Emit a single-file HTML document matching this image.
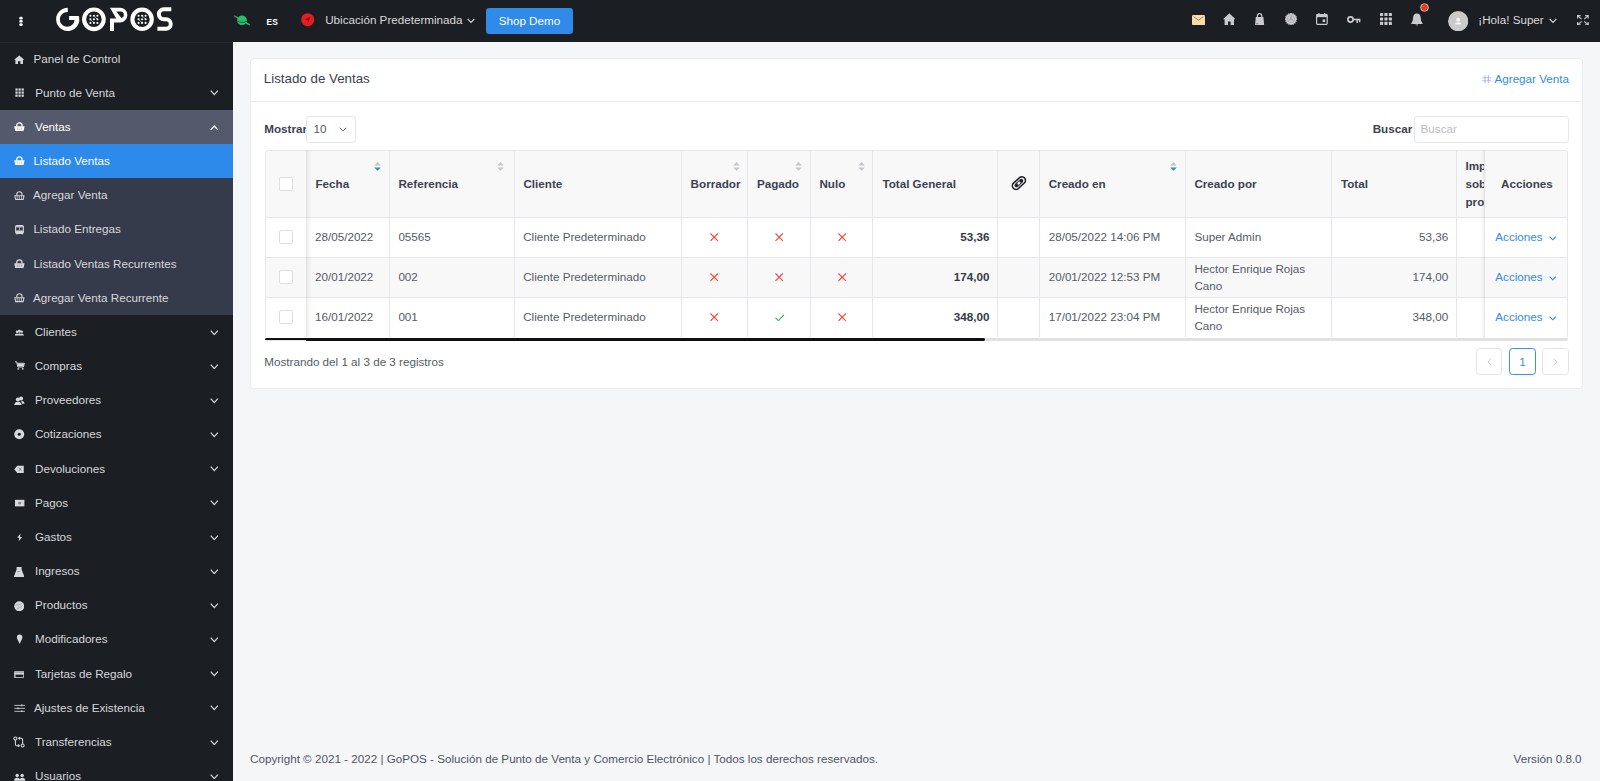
<!DOCTYPE html><html><head><meta charset="utf-8"><style>
*{box-sizing:border-box;margin:0;padding:0}
html,body{width:1600px;height:781px;overflow:hidden;background:#f5f6f8;font-family:"Liberation Sans",sans-serif;font-size:11.667px;color:#505661}
.a{position:absolute;white-space:nowrap}
#nav{position:absolute;left:0;top:0;width:1600px;height:41.667px;background:#1b1e23}
#side{position:absolute;left:0;top:41.667px;width:233.333px;height:740px;background:#1b1e23;overflow:hidden}
.mi{position:absolute;left:0;width:233.333px;height:34.1667px;color:#d4d6da;font-size:11.667px;white-space:nowrap}
.mi .t{position:absolute;top:0;line-height:34.1667px}
.mi svg{position:absolute}
#card{position:absolute;left:250px;top:58.333px;width:1333.333px;height:330.9px;background:#fff;border:1px solid #e9ebee;border-radius:4px}
</style></head><body>
<div id="nav">
<svg class="a" style="left:19px;top:15.5px" width="4" height="11" viewBox="0 0 4 11"><rect x="0.3" y="0.8" width="3.4" height="2.6" rx="1.2" fill="#fff"/><rect x="0.3" y="4" width="3.4" height="2.6" rx="1.2" fill="#fff"/><rect x="0.3" y="7.3" width="3.4" height="2.6" rx="1.2" fill="#fff"/></svg>
<svg class="a" style="left:0;top:0" width="200" height="41" viewBox="0 0 200 41"><path fill="#fff" d="M67.8,7.8 A11.6,11.6 0 1 0 78.8,15.9 L69.1,15.9 L69.1,20 L74.6,20 A7.4,7.4 0 1 1 67.8,12 Z"/><circle cx="93.9" cy="19.3" r="9.8" stroke="#fff" stroke-width="4.1" fill="none"/><path fill="#fff" fill-rule="evenodd" d="M110,7.7 H120 A7.4,7.4 0 0 1 120,22.5 H114 V30.9 H110 V18.6 H116.2 Z M116.4,11.4 H120.3 A3.3,3.3 0 0 1 121.3,17.9 Z"/><circle cx="142.1" cy="19.3" r="9.7" stroke="#fff" stroke-width="4.1" fill="none"/><path stroke="#fff" stroke-width="4" fill="none" d="M171.3,9.3 H163.9 A5,5 0 0 0 163.9,19.3 H166 A4.75,4.75 0 0 1 166,28.8 H157.4"/><circle cx="90.40" cy="15.70" r="1.05" fill="#fff"/><circle cx="90.40" cy="19.30" r="1.05" fill="#fff"/><circle cx="90.40" cy="22.90" r="1.05" fill="#fff"/><circle cx="93.90" cy="15.70" r="1.05" fill="#fff"/><circle cx="93.90" cy="19.30" r="1.05" fill="#fff"/><circle cx="93.90" cy="22.90" r="1.05" fill="#fff"/><circle cx="97.40" cy="15.70" r="1.05" fill="#fff"/><circle cx="97.40" cy="19.30" r="1.05" fill="#fff"/><circle cx="97.40" cy="22.90" r="1.05" fill="#fff"/><path d="M93.90,15.70 L97.40,19.30 M90.40,19.30 L93.90,22.90" stroke="#fff" stroke-width="0.7" opacity="0.8"/><circle cx="138.60" cy="15.70" r="1.05" fill="#fff"/><circle cx="138.60" cy="19.30" r="1.05" fill="#fff"/><circle cx="138.60" cy="22.90" r="1.05" fill="#fff"/><circle cx="142.10" cy="15.70" r="1.05" fill="#fff"/><circle cx="142.10" cy="19.30" r="1.05" fill="#fff"/><circle cx="142.10" cy="22.90" r="1.05" fill="#fff"/><circle cx="145.60" cy="15.70" r="1.05" fill="#fff"/><circle cx="145.60" cy="19.30" r="1.05" fill="#fff"/><circle cx="145.60" cy="22.90" r="1.05" fill="#fff"/><path d="M142.10,15.70 L145.60,19.30 M138.60,19.30 L142.10,22.90" stroke="#fff" stroke-width="0.7" opacity="0.8"/></svg>
<svg class="a" style="left:233px;top:14px" width="18" height="12" viewBox="0 0 18 12"><circle cx="9" cy="6.4" r="4.9" fill="#27bf6c"/><path d="M1.2,1.8 Q4,3.5 9,6.6 Q14,9.5 16.8,10.8" stroke="#27bf6c" stroke-width="1.3" fill="none"/><path d="M3.4,6.6 Q9,10 14.6,7" stroke="#1b1e23" stroke-width="0.6" fill="none"/></svg>
<div class="a" style="left:266.6px;top:17px;font-size:8.4px;font-weight:bold;color:#fff;line-height:10px">ES</div>
<svg class="a" style="left:301px;top:12.5px" width="13.4" height="13.4" viewBox="0 0 13.4 13.4"><circle cx="6.7" cy="6.7" r="6.5" fill="#e91c21"/><path d="M9.6,3.6 L3.8,6.4 L6.6,6.9 L7.0,9.6 Z" fill="#7a0b0e"/></svg>
<div class="a" style="left:325.2px;top:13px;font-size:11.667px;color:#d9dadd;line-height:13.417px">Ubicación Predeterminada</div>
<svg class="a" style="left:467.2px;top:17.6px" width="8" height="5.5" viewBox="0 0 8 5.5"><path d="M0.6,0.8 L4,4.4 L7.4,0.8" stroke="#d6d7da" stroke-width="1.2" fill="none"/></svg>
<div class="a" style="left:485.9px;top:7.6px;width:87.1px;height:26.6px;background:#2f8aea;border-radius:3.3px;color:#fff;font-size:11.667px;line-height:26.6px;text-align:center">Shop Demo</div>
<svg class="a" style="left:1192.00px;top:15.00px" width="13.00" height="10.20" viewBox="0 0 13 10.2"><rect x="0" y="0" width="13" height="10.2" rx="1.3" fill="#fbd9a9"/><path d="M1.5,1.6 L6.5,5.2 L11.5,1.6" stroke="#5a4a3a" stroke-width="0.8" fill="none" opacity="0.7"/></svg>
<svg class="a" style="left:1222.80px;top:13.00px" width="12.60" height="12.20" viewBox="0 0 12.6 12.2"><path d="M6.3,0.3 L0,6.3 L1.6,6.3 L1.6,12.2 L5,12.2 L5,8.6 L7.6,8.6 L7.6,12.2 L11,12.2 L11,6.3 L12.6,6.3 Z" fill="#c9cacd"/></svg>
<svg class="a" style="left:1255.40px;top:12.60px" width="9.20" height="12.60" viewBox="0 0 9.2 12.6"><path d="M2.4,4.5 V3 A2.2,2.3 0 0 1 6.8,3 V4.5" stroke="#c9cacd" stroke-width="1.2" fill="none"/><path d="M0.8,4 H8.4 L9.2,12.6 H0 Z" fill="#c9cacd"/><rect x="1.5" y="10" width="1.5" height="1.2" fill="#777"/></svg>
<svg class="a" style="left:1284.80px;top:13.10px" width="12.00" height="12.00" viewBox="0 0 12 12"><circle cx="6" cy="6" r="5.3" fill="#c9cacd"/><circle cx="11.30" cy="6.00" r="0.85" fill="#c9cacd"/><circle cx="10.90" cy="8.03" r="0.85" fill="#c9cacd"/><circle cx="9.75" cy="9.75" r="0.85" fill="#c9cacd"/><circle cx="8.03" cy="10.90" r="0.85" fill="#c9cacd"/><circle cx="6.00" cy="11.30" r="0.85" fill="#c9cacd"/><circle cx="3.97" cy="10.90" r="0.85" fill="#c9cacd"/><circle cx="2.25" cy="9.75" r="0.85" fill="#c9cacd"/><circle cx="1.10" cy="8.03" r="0.85" fill="#c9cacd"/><circle cx="0.70" cy="6.00" r="0.85" fill="#c9cacd"/><circle cx="1.10" cy="3.97" r="0.85" fill="#c9cacd"/><circle cx="2.25" cy="2.25" r="0.85" fill="#c9cacd"/><circle cx="3.97" cy="1.10" r="0.85" fill="#c9cacd"/><circle cx="6.00" cy="0.70" r="0.85" fill="#c9cacd"/><circle cx="8.03" cy="1.10" r="0.85" fill="#c9cacd"/><circle cx="9.75" cy="2.25" r="0.85" fill="#c9cacd"/><circle cx="10.90" cy="3.97" r="0.85" fill="#c9cacd"/><circle cx="6" cy="6" r="3.6" stroke="#9a9ca0" stroke-width="0.5" fill="none"/><path d="M6,3.3 V6 L8.2,7.4 M6,6 L3.8,7.4" stroke="#8a8c90" stroke-width="0.8" fill="none"/></svg>
<svg class="a" style="left:1316.30px;top:13.10px" width="11.80" height="12.00" viewBox="0 0 11.8 12"><rect x="0.6" y="1.6" width="10.6" height="9.8" rx="0.8" stroke="#c9cacd" stroke-width="1.2" fill="none"/><rect x="0.6" y="1.6" width="10.6" height="2.6" fill="#c9cacd"/><path d="M3,0 V2.5 M8.8,0 V2.5" stroke="#c9cacd" stroke-width="1.2"/><rect x="6.6" y="6.4" width="2.6" height="2.6" fill="#c9cacd"/></svg>
<svg class="a" style="left:1347.20px;top:15.80px" width="13.40" height="7.40" viewBox="0 0 13.4 7.4"><circle cx="3.5" cy="3.5" r="2.6" stroke="#c9cacd" stroke-width="1.7" fill="none"/><path d="M6,2.7 H13.4 V4.3 H6 Z" fill="#c9cacd"/><rect x="9.4" y="4" width="1.5" height="3" fill="#c9cacd"/><rect x="11.9" y="4" width="1.5" height="2.3" fill="#c9cacd"/></svg>
<svg class="a" style="left:1379.90px;top:12.80px" width="12.00" height="12.00" viewBox="0 0 12 12"><rect x="0.00" y="0.00" width="3.1" height="3.1" rx="0.4" fill="#c9cacd"/><rect x="0.00" y="4.40" width="3.1" height="3.1" rx="0.4" fill="#c9cacd"/><rect x="0.00" y="8.80" width="3.1" height="3.1" rx="0.4" fill="#c9cacd"/><rect x="4.40" y="0.00" width="3.1" height="3.1" rx="0.4" fill="#c9cacd"/><rect x="4.40" y="4.40" width="3.1" height="3.1" rx="0.4" fill="#c9cacd"/><rect x="4.40" y="8.80" width="3.1" height="3.1" rx="0.4" fill="#c9cacd"/><rect x="8.80" y="0.00" width="3.1" height="3.1" rx="0.4" fill="#c9cacd"/><rect x="8.80" y="4.40" width="3.1" height="3.1" rx="0.4" fill="#c9cacd"/><rect x="8.80" y="8.80" width="3.1" height="3.1" rx="0.4" fill="#c9cacd"/></svg>
<svg class="a" style="left:1411.40px;top:12.60px" width="11.80" height="13.40" viewBox="0 0 11.8 13.4"><path d="M5.9,0.4 Q2.2,0.6 2.1,4.8 Q2,8.6 0.3,10.2 V11.1 H11.5 V10.2 Q9.8,8.6 9.7,4.8 Q9.6,0.6 5.9,0.4 Z" fill="#c9cacd"/><path d="M4.5,11.6 Q5.9,13.6 7.3,11.6 Z" fill="#c9cacd"/></svg>
<svg class="a" style="left:1420.40px;top:2.80px" width="9.00" height="9.00" viewBox="0 0 9 9"><circle cx="4.5" cy="4.5" r="4.1" fill="#f0f0f0"/><circle cx="4.5" cy="4.5" r="3.4" fill="#ea3c17"/></svg>
<svg class="a" style="left:1448.00px;top:11.00px" width="20.40" height="20.40" viewBox="0 0 20.4 20.4"><circle cx="10.2" cy="10.2" r="10.1" fill="#cacaca"/><circle cx="10.2" cy="8.7" r="2.0" fill="#f4f4f4"/><path d="M6.9,13.6 Q7.2,11.3 10.2,11.3 Q13.2,11.3 13.5,13.6 Z" fill="#f4f4f4"/></svg>
<div class="a" style="left:1478.3px;top:13px;font-size:11.667px;color:#d9dadd;line-height:13.417px">&#161;Hola! Super</div>
<svg class="a" style="left:1548.80px;top:17.80px" width="8.00" height="5.50" viewBox="0 0 8 5.5"><path d="M0.6,0.8 L4,4.4 L7.4,0.8" stroke="#d6d7da" stroke-width="1.2" fill="none"/></svg>
<svg class="a" style="left:1577.30px;top:14.60px" width="11.80" height="10.50" viewBox="0 0 11.8 10.5"><path d="M0.6,3.4 V0.6 H3.6 M0.8,0.8 L4.6,4.2 M11.2,3.4 V0.6 H8.2 M11,0.8 L7.2,4.2 M0.6,7.1 V9.9 H3.6 M0.8,9.7 L4.6,6.3 M11.2,7.1 V9.9 H8.2 M11,9.7 L7.2,6.3" stroke="#c9cacd" stroke-width="1.1" fill="none"/></svg>
</div>
<div id="side">
<div class="a" style="left:0;top:0;width:233.333px;height:1px;background:#24272c"></div>
<div class="mi" style="top:0.000px; color:#d6d8dc">
<svg style="left:14.30px;top:13.00px" width="10.40" height="9.50" viewBox="0 0 12 11"><path d="M6 0.5L0 5.6H1.6V10.5H4.6V7.2H7.4V10.5H10.4V5.6H12Z" fill="#d6d8dc"/></svg>
<span class="t" style="left:33.50px">Panel de Control</span>
</div>
<div class="mi" style="top:34.167px; color:#d6d8dc">
<svg style="left:14.80px;top:12.50px" width="9.40" height="9.40" viewBox="0 0 11 11"><rect x="0.5" y="0.5" width="2.6" height="2.6" fill="#d6d8dc"/><rect x="0.5" y="4.1" width="2.6" height="2.6" fill="#d6d8dc"/><rect x="0.5" y="7.7" width="2.6" height="2.6" fill="#d6d8dc"/><rect x="4.1" y="0.5" width="2.6" height="2.6" fill="#d6d8dc"/><rect x="4.1" y="4.1" width="2.6" height="2.6" fill="#d6d8dc"/><rect x="4.1" y="7.7" width="2.6" height="2.6" fill="#d6d8dc"/><rect x="7.7" y="0.5" width="2.6" height="2.6" fill="#d6d8dc"/><rect x="7.7" y="4.1" width="2.6" height="2.6" fill="#d6d8dc"/><rect x="7.7" y="7.7" width="2.6" height="2.6" fill="#d6d8dc"/></svg>
<span class="t" style="left:35.30px">Punto de Venta</span>
<svg style="left:210.00px;top:14.60px" width="8.60" height="5.60" viewBox="0 0 8.6 5.6"><path d="M0.7 0.7L4.3 4.6L7.9 0.7" stroke="#d6d8dc" stroke-width="1.25" fill="none"/></svg>
</div>
<div class="mi" style="top:68.333px;background:#545a6c; color:#ffffff">
<svg style="left:13.90px;top:12.30px" width="10.80" height="9.50" viewBox="0 0 12 11"><path d="M3 5.2V3.6A3 2.7 0 0 1 9 3.6V5.2" stroke="#ffffff" stroke-width="1.5" fill="none"/><path d="M0 4.8H12L10.8 10.5H1.2Z" fill="#ffffff"/><path d="M3.6 6.3V9.3M6 6.3V9.3M8.4 6.3V9.3" stroke="#545a6c" stroke-width="0.7" opacity="0.55"/></svg>
<span class="t" style="left:35.00px">Ventas</span>
<svg style="left:210.00px;top:14.60px" width="8.60" height="5.60" viewBox="0 0 8.6 5.6"><path d="M0.7 4.9L4.3 1.0L7.9 4.9" stroke="#ffffff" stroke-width="1.25" fill="none"/></svg>
</div>
<div class="mi" style="top:102.500px;background:#2d89ea; color:#ffffff">
<svg style="left:13.90px;top:12.30px" width="10.80" height="9.50" viewBox="0 0 12 11"><path d="M3 5.2V3.6A3 2.7 0 0 1 9 3.6V5.2" stroke="#ffffff" stroke-width="1.5" fill="none"/><path d="M0 4.8H12L10.8 10.5H1.2Z" fill="#ffffff"/><path d="M3.6 6.3V9.3M6 6.3V9.3M8.4 6.3V9.3" stroke="#2d89ea" stroke-width="0.7" opacity="0.55"/></svg>
<span class="t" style="left:33.40px">Listado Ventas</span>
</div>
<div class="mi" style="top:136.667px;background:#363b4b; color:#d6d8dc">
<svg style="left:13.90px;top:12.30px" width="10.80" height="9.50" viewBox="0 0 12 11"><path d="M3 5.2V3.5A3 2.6 0 0 1 9 3.5V5.2" stroke="#d6d8dc" stroke-width="1.3" fill="none"/><path d="M0.7 5.5H11.3L10.3 10H1.7Z" stroke="#d6d8dc" stroke-width="1.2" fill="none"/><path d="M3.5 6V9.5M6 6V9.5M8.5 6V9.5" stroke="#d6d8dc" stroke-width="0.9"/></svg>
<span class="t" style="left:33.00px">Agregar Venta</span>
</div>
<div class="mi" style="top:170.833px;background:#363b4b; color:#d6d8dc">
<svg style="left:15.00px;top:12.60px" width="9.00" height="9.60" viewBox="0 0 10 10.5"><rect x="0.7" y="0.6" width="8.6" height="8.8" rx="1.3" stroke="#d6d8dc" stroke-width="1.2" fill="none"/><rect x="1.2" y="1.2" width="7.6" height="1.3" fill="#d6d8dc"/><rect x="1.2" y="6" width="7.6" height="3" fill="#d6d8dc"/><path d="M5 2.5V5.8" stroke="#d6d8dc" stroke-width="0.8"/><rect x="1.2" y="9" width="1.8" height="1.3" fill="#d6d8dc"/><rect x="7" y="9" width="1.8" height="1.3" fill="#d6d8dc"/></svg>
<span class="t" style="left:33.40px">Listado Entregas</span>
</div>
<div class="mi" style="top:205.000px;background:#363b4b; color:#d6d8dc">
<svg style="left:13.90px;top:12.30px" width="10.80" height="9.50" viewBox="0 0 12 11"><path d="M3 5.2V3.6A3 2.7 0 0 1 9 3.6V5.2" stroke="#d6d8dc" stroke-width="1.5" fill="none"/><path d="M0 4.8H12L10.8 10.5H1.2Z" fill="#d6d8dc"/><path d="M3.6 6.3V9.3M6 6.3V9.3M8.4 6.3V9.3" stroke="#363b4b" stroke-width="0.7" opacity="0.55"/></svg>
<span class="t" style="left:33.40px">Listado Ventas Recurrentes</span>
</div>
<div class="mi" style="top:239.167px;background:#363b4b; color:#d6d8dc">
<svg style="left:13.90px;top:12.30px" width="10.80" height="9.50" viewBox="0 0 12 11"><path d="M3 5.2V3.5A3 2.6 0 0 1 9 3.5V5.2" stroke="#d6d8dc" stroke-width="1.3" fill="none"/><path d="M0.7 5.5H11.3L10.3 10H1.7Z" stroke="#d6d8dc" stroke-width="1.2" fill="none"/><path d="M3.5 6V9.5M6 6V9.5M8.5 6V9.5" stroke="#d6d8dc" stroke-width="0.9"/></svg>
<span class="t" style="left:33.00px">Agregar Venta Recurrente</span>
</div>
<div class="mi" style="top:273.334px; color:#d6d8dc">
<svg style="left:14.00px;top:14.40px" width="10.70" height="6.60" viewBox="0 0 12 8.5"><circle cx="3" cy="3.5" r="1.6" fill="#d6d8dc"/><circle cx="6" cy="3" r="1.9" fill="#d6d8dc"/><circle cx="9" cy="3.5" r="1.6" fill="#d6d8dc"/><path d="M0 8.5Q0.5 5.7 3 5.7Q4.2 5.7 4.6 6.3Q5.2 5.6 6 5.6Q6.8 5.6 7.4 6.3Q7.8 5.7 9 5.7Q11.5 5.7 12 8.5Z" fill="#d6d8dc"/></svg>
<span class="t" style="left:34.70px">Clientes</span>
<svg style="left:210.00px;top:14.60px" width="8.60" height="5.60" viewBox="0 0 8.6 5.6"><path d="M0.7 0.7L4.3 4.6L7.9 0.7" stroke="#d6d8dc" stroke-width="1.25" fill="none"/></svg>
</div>
<div class="mi" style="top:307.500px; color:#d6d8dc">
<svg style="left:15.00px;top:12.00px" width="10.00" height="9.50" viewBox="0 0 12 11"><path d="M0 0.8H2L3.4 7H10L11.3 2.5H2.6" stroke="#d6d8dc" stroke-width="1.2" fill="none"/><path d="M3 3H11L10 6.5H3.8Z" fill="#d6d8dc"/><circle cx="4" cy="9.2" r="1.1" fill="#d6d8dc"/><circle cx="9.3" cy="9.2" r="1.1" fill="#d6d8dc"/></svg>
<span class="t" style="left:34.70px">Compras</span>
<svg style="left:210.00px;top:14.60px" width="8.60" height="5.60" viewBox="0 0 8.6 5.6"><path d="M0.7 0.7L4.3 4.6L7.9 0.7" stroke="#d6d8dc" stroke-width="1.25" fill="none"/></svg>
</div>
<div class="mi" style="top:341.667px; color:#d6d8dc">
<svg style="left:14.00px;top:12.80px" width="10.80" height="9.50" viewBox="0 0 12 11"><circle cx="4.3" cy="4" r="2.4" fill="#d6d8dc"/><circle cx="8" cy="2.8" r="2.3" fill="#d6d8dc"/><path d="M0 10.5Q0.5 6.8 4.3 6.8Q8 6.8 8.6 10.5Z" fill="#d6d8dc"/><path d="M8 5.5Q11.5 5.5 12 9H9" fill="#d6d8dc"/></svg>
<span class="t" style="left:35.00px">Proveedores</span>
<svg style="left:210.00px;top:14.60px" width="8.60" height="5.60" viewBox="0 0 8.6 5.6"><path d="M0.7 0.7L4.3 4.6L7.9 0.7" stroke="#d6d8dc" stroke-width="1.25" fill="none"/></svg>
</div>
<div class="mi" style="top:375.834px; color:#d6d8dc">
<svg style="left:14.20px;top:12.00px" width="10.50" height="10.50" viewBox="0 0 11 11"><circle cx="5.5" cy="5.5" r="5.2" fill="#d6d8dc"/><circle cx="5.5" cy="5.5" r="1.6" fill="#1b1e23"/></svg>
<span class="t" style="left:34.90px">Cotizaciones</span>
<svg style="left:210.00px;top:14.60px" width="8.60" height="5.60" viewBox="0 0 8.6 5.6"><path d="M0.7 0.7L4.3 4.6L7.9 0.7" stroke="#d6d8dc" stroke-width="1.25" fill="none"/></svg>
</div>
<div class="mi" style="top:410.000px; color:#d6d8dc">
<svg style="left:14.00px;top:13.00px" width="10.50" height="8.60" viewBox="0 0 12 10.5"><path d="M3.5 0.8H11.5V9.8H3.5L0 5.3Z" fill="#d6d8dc"/><path d="M5.6 3.2L8.6 7.2M8.6 3.2L5.6 7.2" stroke="#1b1e23" stroke-width="0.8" opacity="0.6"/></svg>
<span class="t" style="left:35.00px">Devoluciones</span>
<svg style="left:210.00px;top:14.60px" width="8.60" height="5.60" viewBox="0 0 8.6 5.6"><path d="M0.7 0.7L4.3 4.6L7.9 0.7" stroke="#d6d8dc" stroke-width="1.25" fill="none"/></svg>
</div>
<div class="mi" style="top:444.167px; color:#d6d8dc">
<svg style="left:13.50px;top:13.20px" width="11.40" height="8.20" viewBox="0 0 11.5 10"><rect x="0" y="1" width="11.5" height="8" fill="#d6d8dc"/><ellipse cx="5.75" cy="5" rx="2" ry="1.6" fill="#888"/></svg>
<span class="t" style="left:35.00px">Pagos</span>
<svg style="left:210.00px;top:14.60px" width="8.60" height="5.60" viewBox="0 0 8.6 5.6"><path d="M0.7 0.7L4.3 4.6L7.9 0.7" stroke="#d6d8dc" stroke-width="1.25" fill="none"/></svg>
</div>
<div class="mi" style="top:478.334px; color:#d6d8dc">
<svg style="left:15.90px;top:12.90px" width="6.60" height="9.00" viewBox="0 0 9 11"><path d="M6.2 0L1.5 6H4.5L3.5 11L8.5 4.8H5.5Z" fill="#d6d8dc"/></svg>
<span class="t" style="left:35.00px">Gastos</span>
<svg style="left:210.00px;top:14.60px" width="8.60" height="5.60" viewBox="0 0 8.6 5.6"><path d="M0.7 0.7L4.3 4.6L7.9 0.7" stroke="#d6d8dc" stroke-width="1.25" fill="none"/></svg>
</div>
<div class="mi" style="top:512.500px; color:#d6d8dc">
<svg style="left:14.20px;top:12.50px" width="10.20" height="10.40" viewBox="0 0 10.2 10.4"><path d="M2.6,0 H7.6 V2.4 L10.2,9.3 Q10.4,10.4 9.2,10.4 H1 Q-0.2,10.4 0,9.3 L2.6,2.4 Z" fill="#d6d8dc"/><path d="M3.2,4.6 H6" stroke="#777" stroke-width="0.6"/></svg>
<span class="t" style="left:34.90px">Ingresos</span>
<svg style="left:210.00px;top:14.60px" width="8.60" height="5.60" viewBox="0 0 8.6 5.6"><path d="M0.7 0.7L4.3 4.6L7.9 0.7" stroke="#d6d8dc" stroke-width="1.25" fill="none"/></svg>
</div>
<div class="mi" style="top:546.667px; color:#d6d8dc">
<svg style="left:13.90px;top:12.40px" width="10.60" height="10.40" viewBox="0 0 11 11"><circle cx="5.5" cy="5.5" r="5.3" fill="#d6d8dc"/><path d="M2 4Q5 5 8 2.5M3 8Q6.5 7.3 9 4.8" stroke="#888" stroke-width="0.6" fill="none"/></svg>
<span class="t" style="left:35.00px">Productos</span>
<svg style="left:210.00px;top:14.60px" width="8.60" height="5.60" viewBox="0 0 8.6 5.6"><path d="M0.7 0.7L4.3 4.6L7.9 0.7" stroke="#d6d8dc" stroke-width="1.25" fill="none"/></svg>
</div>
<div class="mi" style="top:580.834px; color:#d6d8dc">
<svg style="left:15.60px;top:12.00px" width="7.30" height="10.20" viewBox="0 0 8 11"><circle cx="4" cy="3.4" r="3" fill="#d6d8dc"/><path d="M1.5 5.3H6.5L4 11Z" fill="#d6d8dc"/></svg>
<span class="t" style="left:35.00px">Modificadores</span>
<svg style="left:210.00px;top:14.60px" width="8.60" height="5.60" viewBox="0 0 8.6 5.6"><path d="M0.7 0.7L4.3 4.6L7.9 0.7" stroke="#d6d8dc" stroke-width="1.25" fill="none"/></svg>
</div>
<div class="mi" style="top:615.001px; color:#d6d8dc">
<svg style="left:13.80px;top:14.00px" width="10.60" height="7.40" viewBox="0 0 10.6 7.4"><rect x="0" y="0" width="10.6" height="7.4" rx="0.5" fill="#a9abae"/><rect x="0" y="2.1" width="10.6" height="1.1" fill="#d6d8dc"/><rect x="1.4" y="3.7" width="7.9" height="2.2" rx="1.1" fill="#1b1e23"/></svg>
<span class="t" style="left:34.90px">Tarjetas de Regalo</span>
<svg style="left:210.00px;top:14.60px" width="8.60" height="5.60" viewBox="0 0 8.6 5.6"><path d="M0.7 0.7L4.3 4.6L7.9 0.7" stroke="#d6d8dc" stroke-width="1.25" fill="none"/></svg>
</div>
<div class="mi" style="top:649.167px; color:#d6d8dc">
<svg style="left:13.50px;top:12.80px" width="11.40" height="8.80" viewBox="0 0 11.5 9.5"><path d="M0 1.5H11.5M0 4.7H11.5M0 7.9H11.5" stroke="#d6d8dc" stroke-width="0.9"/><path d="M8 0.5V2.5M4 3.7V5.7M8 6.9V8.9" stroke="#d6d8dc" stroke-width="1.3"/></svg>
<span class="t" style="left:34.00px">Ajustes de Existencia</span>
<svg style="left:210.00px;top:14.60px" width="8.60" height="5.60" viewBox="0 0 8.6 5.6"><path d="M0.7 0.7L4.3 4.6L7.9 0.7" stroke="#d6d8dc" stroke-width="1.25" fill="none"/></svg>
</div>
<div class="mi" style="top:683.334px; color:#d6d8dc">
<svg style="left:13.00px;top:11.30px" width="12.00" height="12.00" viewBox="0 0 12.5 12"><circle cx="2.5" cy="2.3" r="1.6" stroke="#d6d8dc" stroke-width="1.1" fill="none"/><path d="M2.5,3.9 V8.3 Q2.5,9.9 4.1,9.9 H6.6 M5.3,8.6 L6.6,9.9 L5.3,11.2" stroke="#d6d8dc" stroke-width="1.1" fill="none"/><circle cx="10" cy="9.7" r="1.6" stroke="#d6d8dc" stroke-width="1.1" fill="none"/><path d="M10,8.1 V3.7 Q10,2.1 8.4,2.1 H5.9 M7.2,0.8 L5.9,2.1 L7.2,3.4" stroke="#d6d8dc" stroke-width="1.1" fill="none"/></svg>
<span class="t" style="left:35.00px">Transferencias</span>
<svg style="left:210.00px;top:14.60px" width="8.60" height="5.60" viewBox="0 0 8.6 5.6"><path d="M0.7 0.7L4.3 4.6L7.9 0.7" stroke="#d6d8dc" stroke-width="1.25" fill="none"/></svg>
</div>
<div class="mi" style="top:717.501px; color:#d6d8dc">
<svg style="left:14.00px;top:13.50px" width="11.50" height="8.20" viewBox="0 0 12 8.5"><circle cx="3.3" cy="2.5" r="1.8" fill="#d6d8dc"/><circle cx="8.5" cy="2.5" r="1.8" fill="#d6d8dc"/><path d="M0 8Q0.3 5 3.3 5Q6 5 6.5 8ZM5.8 8Q6 5 8.5 5Q11.5 5 11.8 8Z" fill="#d6d8dc"/></svg>
<span class="t" style="left:35.00px">Usuarios</span>
<svg style="left:210.00px;top:14.60px" width="8.60" height="5.60" viewBox="0 0 8.6 5.6"><path d="M0.7 0.7L4.3 4.6L7.9 0.7" stroke="#d6d8dc" stroke-width="1.25" fill="none"/></svg>
</div>
</div>
<div id="card"></div>
<div class="a" style="left:250.00px;top:101.00px;width:1333.33px;height:1px;background:#eceef1"></div>
<div class="a" style="left:263.80px;top:71.00px;font-size:13.333px;line-height:15.333px;color:#3b404c;">Listado de Ventas</div>
<svg class="a" style="left:1481.6px;top:75.4px" width="9.4" height="8.6" viewBox="0 0 9.4 8.6"><path d="M3,0.3 V8.3 M6.4,0.3 V8.3 M0.3,2.8 H9.1 M0.3,5.8 H9.1" stroke="#aab2ee" stroke-width="0.9"/></svg>
<div class="a" style="left:1494.50px;top:72.00px;font-size:11.667px;line-height:13.417px;color:#2f8be6;">Agregar Venta</div>
<div class="a" style="left:264.20px;top:122.00px;font-size:11.667px;line-height:13.417px;color:#3c4250;font-weight:bold;">Mostrar</div>
<div class="a" style="left:306.20px;top:116.10px;width:49.4px;height:26.5px;border:1px solid #e3e5e8;border-radius:3.3px;background:#fff"></div>
<div class="a" style="left:313.60px;top:122.00px;font-size:11.667px;line-height:13.417px;color:#555b66;">10</div>
<svg class="a" style="left:338.8px;top:127.0px" width="8" height="5" viewBox="0 0 8 5"><path d="M0.7,0.8 L4,4 L7.3,0.8" stroke="#656a73" stroke-width="0.95" fill="none"/></svg>
<div class="a" style="right:187.80px;top:122.00px;font-size:11.667px;line-height:13.417px;color:#3c4250;font-weight:bold;">Buscar</div>
<div class="a" style="left:1413.80px;top:116.10px;width:155px;height:26.5px;border:1px solid #e3e5e8;border-radius:3.3px;background:#fff"></div>
<div class="a" style="left:1420.60px;top:122.00px;font-size:11.667px;line-height:13.417px;color:#b9bcc2;">Buscar</div>
<div class="a" style="left:264.50px;top:150.30px;width:1303.90px;height:187.20px;background:#fff;border:1px solid #e6e7ea;border-bottom:none;border-radius:4px 4px 0 0;overflow:hidden"></div>
<div class="a" style="left:265.50px;top:151.30px;width:1301.90px;height:66.20px;background:#f8f8f9;border-radius:3px 3px 0 0"></div>
<div class="a" style="left:265.50px;top:257.50px;width:1301.90px;height:40px;background:#f8f8f9"></div>
<div class="a" style="left:264.50px;top:217.00px;width:1303.90px;height:1px;background:#e6e7ea"></div>
<div class="a" style="left:264.50px;top:257.00px;width:1303.90px;height:1px;background:#e6e7ea"></div>
<div class="a" style="left:264.50px;top:297.00px;width:1303.90px;height:1px;background:#e6e7ea"></div>
<div class="a" style="left:388.90px;top:150.30px;width:1px;height:187.20px;background:#e6e7ea"></div>
<div class="a" style="left:513.90px;top:150.30px;width:1px;height:187.20px;background:#e6e7ea"></div>
<div class="a" style="left:681.10px;top:150.30px;width:1px;height:187.20px;background:#e6e7ea"></div>
<div class="a" style="left:747.30px;top:150.30px;width:1px;height:187.20px;background:#e6e7ea"></div>
<div class="a" style="left:810.10px;top:150.30px;width:1px;height:187.20px;background:#e6e7ea"></div>
<div class="a" style="left:872.20px;top:150.30px;width:1px;height:187.20px;background:#e6e7ea"></div>
<div class="a" style="left:997.00px;top:150.30px;width:1px;height:187.20px;background:#e6e7ea"></div>
<div class="a" style="left:1039.20px;top:150.30px;width:1px;height:187.20px;background:#e6e7ea"></div>
<div class="a" style="left:1185.10px;top:150.30px;width:1px;height:187.20px;background:#e6e7ea"></div>
<div class="a" style="left:1331.00px;top:150.30px;width:1px;height:187.20px;background:#e6e7ea"></div>
<div class="a" style="left:1456.40px;top:150.30px;width:1px;height:187.20px;background:#e6e7ea"></div>
<div class="a" style="left:306.00px;top:150.30px;width:6px;height:187.20px;background:linear-gradient(90deg,rgba(0,0,0,0.09),rgba(0,0,0,0.04) 40%,rgba(0,0,0,0))"></div>
<div class="a" style="left:315.50px;top:177.00px;font-size:11.667px;line-height:13.417px;color:#3c4250;font-weight:bold;">Fecha</div>
<div class="a" style="left:398.40px;top:177.00px;font-size:11.667px;line-height:13.417px;color:#3c4250;font-weight:bold;">Referencia</div>
<div class="a" style="left:523.40px;top:177.00px;font-size:11.667px;line-height:13.417px;color:#3c4250;font-weight:bold;">Cliente</div>
<div class="a" style="left:690.60px;top:177.00px;font-size:11.667px;line-height:13.417px;color:#3c4250;font-weight:bold;">Borrador</div>
<div class="a" style="left:756.90px;top:177.00px;font-size:11.667px;line-height:13.417px;color:#3c4250;font-weight:bold;">Pagado</div>
<div class="a" style="left:819.40px;top:177.00px;font-size:11.667px;line-height:13.417px;color:#3c4250;font-weight:bold;">Nulo</div>
<div class="a" style="left:882.40px;top:177.00px;font-size:11.667px;line-height:13.417px;color:#3c4250;font-weight:bold;">Total General</div>
<div class="a" style="left:1048.70px;top:177.00px;font-size:11.667px;line-height:13.417px;color:#3c4250;font-weight:bold;">Creado en</div>
<div class="a" style="left:1194.40px;top:177.00px;font-size:11.667px;line-height:13.417px;color:#3c4250;font-weight:bold;">Creado por</div>
<div class="a" style="left:1340.90px;top:177.00px;font-size:11.667px;line-height:13.417px;color:#3c4250;font-weight:bold;">Total</div>
<div class="a" style="left:1456.9px;top:150px;width:27.6px;height:67px;overflow:hidden">
<div class="a" style="left:8.6px;top:9px;font-size:11.667px;line-height:13.417px;color:#3c4250;font-weight:bold">Imp</div>
<div class="a" style="left:8.6px;top:27px;font-size:11.667px;line-height:13.417px;color:#3c4250;font-weight:bold">sob</div>
<div class="a" style="left:8.6px;top:45px;font-size:11.667px;line-height:13.417px;color:#3c4250;font-weight:bold">pro</div>
</div>
<svg class="a" style="left:374.10px;top:162.4px" width="7" height="8.8" viewBox="0 0 7 8.8"><path d="M3.5,0 L6.8,3.4 H0.2 Z" fill="#c3c5c9"/><path d="M3.5,8.8 L6.8,5.4 H0.2 Z" fill="#2b86ef"/></svg>
<svg class="a" style="left:497.45px;top:162.4px" width="7" height="8.8" viewBox="0 0 7 8.8"><path d="M3.5,0 L6.8,3.4 H0.2 Z" fill="#c3c5c9"/><path d="M3.5,8.8 L6.8,5.4 H0.2 Z" fill="#c3c5c9"/></svg>
<svg class="a" style="left:732.75px;top:162.4px" width="7" height="8.8" viewBox="0 0 7 8.8"><path d="M3.5,0 L6.8,3.4 H0.2 Z" fill="#c3c5c9"/><path d="M3.5,8.8 L6.8,5.4 H0.2 Z" fill="#c3c5c9"/></svg>
<svg class="a" style="left:795.25px;top:162.4px" width="7" height="8.8" viewBox="0 0 7 8.8"><path d="M3.5,0 L6.8,3.4 H0.2 Z" fill="#c3c5c9"/><path d="M3.5,8.8 L6.8,5.4 H0.2 Z" fill="#c3c5c9"/></svg>
<svg class="a" style="left:857.75px;top:162.4px" width="7" height="8.8" viewBox="0 0 7 8.8"><path d="M3.5,0 L6.8,3.4 H0.2 Z" fill="#c3c5c9"/><path d="M3.5,8.8 L6.8,5.4 H0.2 Z" fill="#c3c5c9"/></svg>
<svg class="a" style="left:1169.90px;top:162.4px" width="7" height="8.8" viewBox="0 0 7 8.8"><path d="M3.5,0 L6.8,3.4 H0.2 Z" fill="#c3c5c9"/><path d="M3.5,8.8 L6.8,5.4 H0.2 Z" fill="#2b86ef"/></svg>
<svg class="a" style="left:1008px;top:172px" width="22" height="22" viewBox="-11 -11 22 22"><g transform="translate(-0.1 0.1) rotate(-43)"><rect x="-7.6" y="-3.6" width="15.2" height="7.2" rx="3.6" stroke="#1d1f24" stroke-width="1.6" fill="none"/><rect x="-5.2" y="-1.9" width="10.4" height="3.8" rx="1.9" fill="#1d1f24"/><ellipse cx="0" cy="0" rx="1.9" ry="1.1" fill="#f2f2f2"/><path d="M-3.2,-1.9 H3.2 M-3.2,1.9 H3.2" stroke="#777" stroke-width="0.7"/></g></svg>
<div class="a" style="left:279.30px;top:177.30px;width:13.3px;height:13.3px;border:1px solid #dcdee2;border-radius:2px;background:#fff"></div>
<div class="a" style="left:279.30px;top:230.30px;width:13.3px;height:13.3px;border:1px solid #dcdee2;border-radius:2px;background:#fff"></div>
<div class="a" style="left:279.30px;top:270.30px;width:13.3px;height:13.3px;border:1px solid #dcdee2;border-radius:2px;background:#fff"></div>
<div class="a" style="left:279.30px;top:310.30px;width:13.3px;height:13.3px;border:1px solid #dcdee2;border-radius:2px;background:#fff"></div>
<div class="a" style="left:315.00px;top:230.00px;font-size:11.667px;line-height:13.417px;color:#555b66;">28/05/2022</div>
<div class="a" style="left:398.40px;top:230.00px;font-size:11.667px;line-height:13.417px;color:#555b66;">05565</div>
<div class="a" style="left:523.20px;top:230.00px;font-size:11.667px;line-height:13.417px;color:#555b66;">Cliente Predeterminado</div>
<svg class="a" style="left:710.40px;top:233.30px" width="8.4" height="8.4" viewBox="0 0 8.4 8.4"><path d="M0.5,0.5 L7.9,7.9 M7.9,0.5 L0.5,7.9" stroke="#ee4a3e" stroke-width="1.15"/></svg>
<svg class="a" style="left:775.10px;top:233.30px" width="8.4" height="8.4" viewBox="0 0 8.4 8.4"><path d="M0.5,0.5 L7.9,7.9 M7.9,0.5 L0.5,7.9" stroke="#ee4a3e" stroke-width="1.15"/></svg>
<svg class="a" style="left:837.50px;top:233.30px" width="8.4" height="8.4" viewBox="0 0 8.4 8.4"><path d="M0.5,0.5 L7.9,7.9 M7.9,0.5 L0.5,7.9" stroke="#ee4a3e" stroke-width="1.15"/></svg>
<div class="a" style="right:610.60px;top:230.00px;font-size:11.667px;line-height:13.417px;color:#353b46;font-weight:bold;">53,36</div>
<div class="a" style="left:1048.70px;top:230.00px;font-size:11.667px;line-height:13.417px;color:#555b66;">28/05/2022 14:06 PM</div>
<div class="a" style="left:1194.40px;top:230.00px;font-size:11.667px;line-height:13.417px;color:#555b66;">Super Admin</div>
<div class="a" style="right:151.80px;top:230.00px;font-size:11.667px;line-height:13.417px;color:#555b66;">53,36</div>
<div class="a" style="left:315.00px;top:270.00px;font-size:11.667px;line-height:13.417px;color:#555b66;">20/01/2022</div>
<div class="a" style="left:398.40px;top:270.00px;font-size:11.667px;line-height:13.417px;color:#555b66;">002</div>
<div class="a" style="left:523.20px;top:270.00px;font-size:11.667px;line-height:13.417px;color:#555b66;">Cliente Predeterminado</div>
<svg class="a" style="left:710.40px;top:273.30px" width="8.4" height="8.4" viewBox="0 0 8.4 8.4"><path d="M0.5,0.5 L7.9,7.9 M7.9,0.5 L0.5,7.9" stroke="#ee4a3e" stroke-width="1.15"/></svg>
<svg class="a" style="left:775.10px;top:273.30px" width="8.4" height="8.4" viewBox="0 0 8.4 8.4"><path d="M0.5,0.5 L7.9,7.9 M7.9,0.5 L0.5,7.9" stroke="#ee4a3e" stroke-width="1.15"/></svg>
<svg class="a" style="left:837.50px;top:273.30px" width="8.4" height="8.4" viewBox="0 0 8.4 8.4"><path d="M0.5,0.5 L7.9,7.9 M7.9,0.5 L0.5,7.9" stroke="#ee4a3e" stroke-width="1.15"/></svg>
<div class="a" style="right:610.60px;top:270.00px;font-size:11.667px;line-height:13.417px;color:#353b46;font-weight:bold;">174,00</div>
<div class="a" style="left:1048.70px;top:270.00px;font-size:11.667px;line-height:13.417px;color:#555b66;">20/01/2022 12:53 PM</div>
<div class="a" style="left:1194.40px;top:262.00px;font-size:11.667px;line-height:13.417px;color:#555b66;">Hector Enrique Rojas</div>
<div class="a" style="left:1194.40px;top:279.00px;font-size:11.667px;line-height:13.417px;color:#555b66;">Cano</div>
<div class="a" style="right:151.80px;top:270.00px;font-size:11.667px;line-height:13.417px;color:#555b66;">174,00</div>
<div class="a" style="left:315.00px;top:310.00px;font-size:11.667px;line-height:13.417px;color:#555b66;">16/01/2022</div>
<div class="a" style="left:398.40px;top:310.00px;font-size:11.667px;line-height:13.417px;color:#555b66;">001</div>
<div class="a" style="left:523.20px;top:310.00px;font-size:11.667px;line-height:13.417px;color:#555b66;">Cliente Predeterminado</div>
<svg class="a" style="left:710.40px;top:313.30px" width="8.4" height="8.4" viewBox="0 0 8.4 8.4"><path d="M0.5,0.5 L7.9,7.9 M7.9,0.5 L0.5,7.9" stroke="#ee4a3e" stroke-width="1.15"/></svg>
<svg class="a" style="left:774.50px;top:313.90px" width="9.6" height="7.4" viewBox="0 0 9.6 7.4"><path d="M0.5,3.8 L3.4,6.6 L9.1,0.6" stroke="#37b35a" stroke-width="1.1" fill="none"/></svg>
<svg class="a" style="left:837.50px;top:313.30px" width="8.4" height="8.4" viewBox="0 0 8.4 8.4"><path d="M0.5,0.5 L7.9,7.9 M7.9,0.5 L0.5,7.9" stroke="#ee4a3e" stroke-width="1.15"/></svg>
<div class="a" style="right:610.60px;top:310.00px;font-size:11.667px;line-height:13.417px;color:#353b46;font-weight:bold;">348,00</div>
<div class="a" style="left:1048.70px;top:310.00px;font-size:11.667px;line-height:13.417px;color:#555b66;">17/01/2022 23:04 PM</div>
<div class="a" style="left:1194.40px;top:302.00px;font-size:11.667px;line-height:13.417px;color:#555b66;">Hector Enrique Rojas</div>
<div class="a" style="left:1194.40px;top:319.00px;font-size:11.667px;line-height:13.417px;color:#555b66;">Cano</div>
<div class="a" style="right:151.80px;top:310.00px;font-size:11.667px;line-height:13.417px;color:#555b66;">348,00</div>
<div class="a" style="left:1484.50px;top:150.30px;width:83.90px;height:187.20px;background:#fff;border-right:1px solid #e6e7ea;border-top:1px solid #e6e7ea;border-top-right-radius:4px"></div>
<div class="a" style="left:1484.50px;top:151.30px;width:82.90px;height:66.20px;background:#f8f8f9;border-top-right-radius:3px"></div>
<div class="a" style="left:1484.50px;top:257.50px;width:82.90px;height:40px;background:#f8f8f9"></div>
<div class="a" style="left:1484.50px;top:217.00px;width:83.90px;height:1px;background:#e6e7ea"></div>
<div class="a" style="left:1484.50px;top:257.00px;width:83.90px;height:1px;background:#e6e7ea"></div>
<div class="a" style="left:1484.50px;top:297.00px;width:83.90px;height:1px;background:#e6e7ea"></div>
<div class="a" style="left:1480.50px;top:150.30px;width:4px;height:190.70px;background:linear-gradient(90deg,rgba(0,0,0,0),rgba(0,0,0,0.03) 50%,rgba(0,0,0,0.10))"></div>
<div class="a" style="left:1501.00px;top:177.00px;font-size:11.667px;line-height:13.417px;color:#3c4250;font-weight:bold;">Acciones</div>
<div class="a" style="left:1495.30px;top:230.00px;font-size:11.667px;line-height:13.417px;color:#2f8be6;">Acciones</div>
<svg class="a" style="left:1548.6px;top:236.10px" width="7.4" height="4.6" viewBox="0 0 7.4 4.6"><path d="M0.6,0.6 L3.7,3.8 L6.8,0.6" stroke="#2f8be6" stroke-width="1.1" fill="none"/></svg>
<div class="a" style="left:1495.30px;top:270.00px;font-size:11.667px;line-height:13.417px;color:#2f8be6;">Acciones</div>
<svg class="a" style="left:1548.6px;top:276.10px" width="7.4" height="4.6" viewBox="0 0 7.4 4.6"><path d="M0.6,0.6 L3.7,3.8 L6.8,0.6" stroke="#2f8be6" stroke-width="1.1" fill="none"/></svg>
<div class="a" style="left:1495.30px;top:310.00px;font-size:11.667px;line-height:13.417px;color:#2f8be6;">Acciones</div>
<svg class="a" style="left:1548.6px;top:316.10px" width="7.4" height="4.6" viewBox="0 0 7.4 4.6"><path d="M0.6,0.6 L3.7,3.8 L6.8,0.6" stroke="#2f8be6" stroke-width="1.1" fill="none"/></svg>
<div class="a" style="left:264.50px;top:337.50px;width:1303.90px;height:3.6px;background:#e1e1e1;border-radius:0 0 4px 4px"></div>
<div class="a" style="left:264.80px;top:337.60px;width:720.4px;height:3.3px;background:#0f1013;border-radius:2px"></div>
<div class="a" style="left:264.50px;top:340.00px;width:41.8px;height:1.3px;background:#e4e4e4"></div>
<div class="a" style="left:264.30px;top:355.00px;font-size:11.667px;line-height:13.417px;color:#555b66;">Mostrando del 1 al 3 de 3 registros</div>
<div class="a" style="left:1476.10px;top:348.40px;width:26.4px;height:26.4px;border:1.0px solid #e2e4e7;border-radius:3.5px;background:#fff"></div>
<div class="a" style="left:1509.30px;top:348.40px;width:26.4px;height:26.4px;border:1.3px solid #3b8fec;border-radius:3.5px;background:#fff"></div>
<div class="a" style="left:1542.30px;top:348.40px;width:26.4px;height:26.4px;border:1.0px solid #e2e4e7;border-radius:3.5px;background:#fff"></div>
<svg class="a" style="left:1486.8px;top:357.6px" width="5" height="8" viewBox="0 0 5 8"><path d="M4.3,0.6 L0.9,4 L4.3,7.4" stroke="#c8cacd" stroke-width="0.9" fill="none"/></svg>
<svg class="a" style="left:1553.2px;top:357.6px" width="5" height="8" viewBox="0 0 5 8"><path d="M0.7,0.6 L4.1,4 L0.7,7.4" stroke="#c8cacd" stroke-width="0.9" fill="none"/></svg>
<div class="a" style="left:1519.20px;top:355.00px;font-size:11.667px;line-height:13.417px;color:#3b8fec;">1</div>
<div class="a" style="left:250.00px;top:752.00px;font-size:11.667px;line-height:13.417px;color:#4f5563;">Copyright &#169; 2021 - 2022 | GoPOS - Soluci&#243;n de Punto de Venta y Comercio Electr&#243;nico | Todos los derechos reservados.</div>
<div class="a" style="right:18.40px;top:752.00px;font-size:11.667px;line-height:13.417px;color:#4f5563;">Versi&#243;n 0.8.0</div>
</body></html>
